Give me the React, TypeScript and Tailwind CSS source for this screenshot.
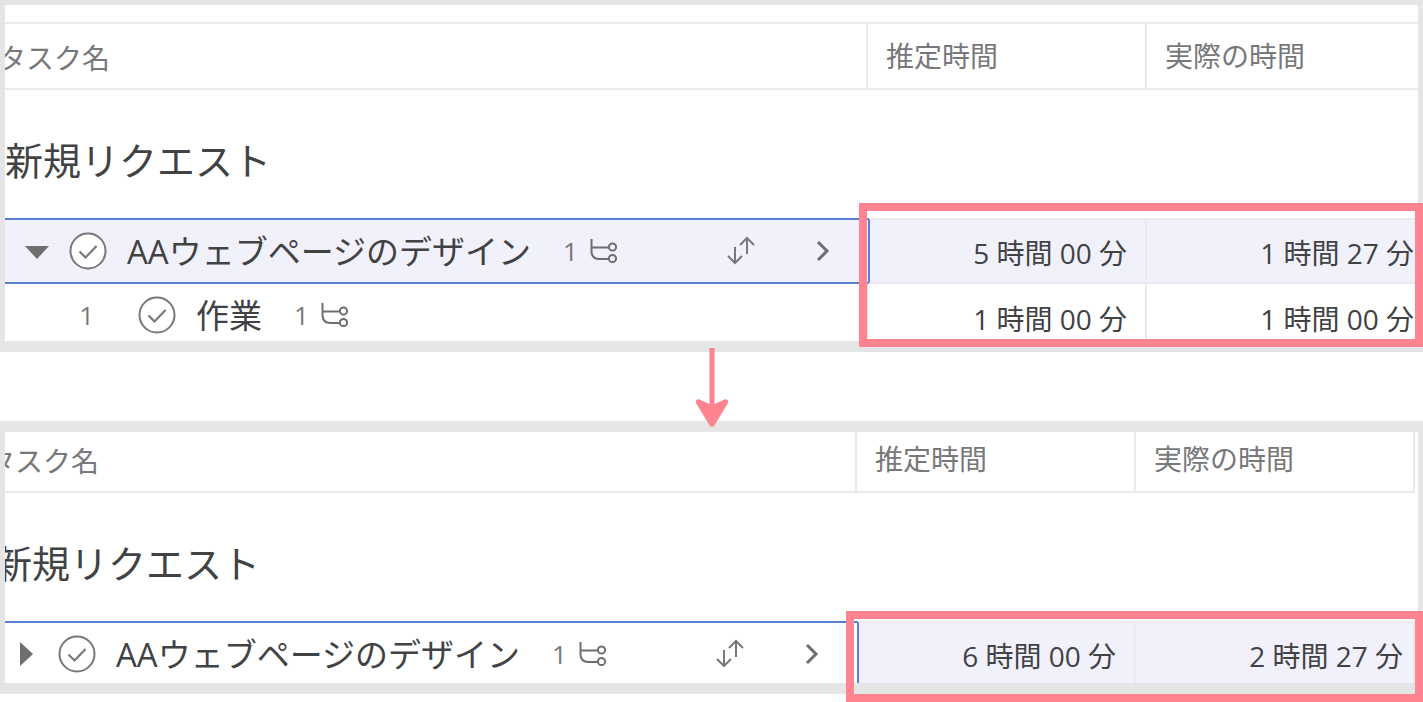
import clsx from "clsx";

type Task = {
  name: string;
  number?: string;
  subtasks: number;
  estimated: string;
  actual: string;
  selected?: boolean;
  open?: boolean;
};

const expandedTasks: Task[] = [
  {
    name: "AAウェブページのデザイン",
    subtasks: 1,
    estimated: "5 時間 00 分",
    actual: "1 時間 27 分",
    selected: true,
    open: true,
  },
  {
    name: "作業",
    number: "1",
    subtasks: 1,
    estimated: "1 時間 00 分",
    actual: "1 時間 00 分",
  },
];

const collapsedTasks: Task[] = [
  {
    name: "AAウェブページのデザイン",
    subtasks: 1,
    estimated: "6 時間 00 分",
    actual: "2 時間 27 分",
    selected: true,
  },
];

function Caret({ open }: { open?: boolean }) {
  return (
    <svg width="24" height="24" viewBox="0 0 24 24" fill="#6d6e6f">
      {open ? <path d="M0 7h24L12 20z" /> : <path d="M6 0v24l13-12z" />}
    </svg>
  );
}

function CheckCircle() {
  return (
    <svg width="38" height="38" viewBox="0 0 38 38" fill="none" stroke="#77787a">
      <circle cx="19" cy="19" r="17.5" fill="#fff" strokeWidth="2" />
      <path d="M10.500 19.500l6 6 11-11.500" strokeWidth="2.2" />
    </svg>
  );
}

function SubtaskIcon() {
  return (
    <svg width="28" height="26" viewBox="0 0 28 26" fill="none" stroke="#6d6e6f" strokeWidth="2">
      <path d="M1.500 1v12q0 8 8 8H19M1.500 9.500H19" />
      <circle cx="22.5" cy="9" r="3.6" />
      <circle cx="22.5" cy="20.5" r="3.6" />
    </svg>
  );
}

function SortIcon() {
  return (
    <svg width="30" height="30" viewBox="0 0 30 30" fill="none" stroke="#77787a" strokeWidth="2">
      <path d="M9 11v16M2 20l7 7 7-7M21 18V2M14 9l7-7 7 7" />
    </svg>
  );
}

function ChevronIcon() {
  return (
    <svg width="14" height="22" viewBox="0 0 14 22" fill="none" stroke="#6d6e6f" strokeWidth="3">
      <path d="M2 2l9 9-9 9" />
    </svg>
  );
}

function TaskRow({ task }: { task: Task }) {
  const timeCell = clsx(
    "border-r-2 border-[#ebe9e9] pt-1 text-right text-[28px] text-[#414243]",
    task.selected && "border-y-2 bg-[#f1f1fc]"
  );

  return (
    <tr className="h-[66px]">
      <td
        className={clsx(
          "p-0",
          task.selected ? "border-y-2 border-[#5680d4]" : "border-r-2 border-[#ebe9e9] pb-1",
          task.open && "bg-[#f1f1fc]"
        )}
      >
        <div className="flex items-center pl-[27px] pr-[38px]">
          {task.number ? (
            <span className="mr-11 w-[69px] text-right text-[26px] text-[#77787a]">
              {task.number}
            </span>
          ) : (
            <button type="button" aria-label="サブタスク" className="mr-5">
              <Caret open={task.open} />
            </button>
          )}
          <button type="button" aria-label="完了" className="mr-5">
            <CheckCircle />
          </button>
          <span className="text-[33px] text-[#414243]">{task.name}</span>
          <span className="ml-8 mr-3 text-[26px] text-[#77787a]">
            {task.subtasks}
          </span>
          <SubtaskIcon />
          {task.selected && (
            <div className="ml-auto flex items-center gap-[60px]">
              <button type="button" aria-label="並べ替え">
                <SortIcon />
              </button>
              <button type="button" aria-label="詳細">
                <ChevronIcon />
              </button>
            </div>
          )}
        </div>
      </td>
      <td
        className={clsx(
          timeCell,
          "pr-[18px]",
          task.selected && "border-l-2 border-l-[#5680d4]"
        )}
      >
        {task.estimated}
      </td>
      <td className={clsx(timeCell, "pr-[10px]")}>{task.actual}</td>
    </tr>
  );
}

function TaskTable({ tasks, className }: { tasks: Task[]; className: string }) {
  const headCell =
    "border-y-2 border-r-2 border-[#ebe9e9] text-left text-[28px] font-normal text-[#77787a]";

  return (
    <table
      className={clsx(
        "table-fixed border-separate border-spacing-0 whitespace-nowrap leading-none",
        className
      )}
    >
      <colgroup>
        <col />
        <col className="w-[279px]" />
        <col className="w-[279px]" />
      </colgroup>
      <thead>
        <tr className="h-[68px]">
          <th className={clsx(headCell, "p-0 pt-1")}>タスク名</th>
          <th className={clsx(headCell, "p-0 pl-[18px]")}>推定時間</th>
          <th className={clsx(headCell, "p-0 pl-[18px]")}>実際の時間</th>
        </tr>
      </thead>
      <tbody>
        <tr className="h-32">
          <td colSpan={3} className="pb-0 pl-[7px] pt-3">
            <h2 className="text-[38px] text-[#414243]">新規リクエスト</h2>
          </td>
        </tr>
        {tasks.map((task) => (
          <TaskRow key={task.name} task={task} />
        ))}
      </tbody>
    </table>
  );
}

export default function App() {
  return (
    <main className="bg-white font-['Open_Sans','Noto_Sans_CJK_JP',sans-serif]">
      <section className="relative">
        <div className="overflow-hidden border-[5px] border-b-[11px] border-[#e5e5e5] pt-[17px]">
          <TaskTable
            tasks={expandedTasks}
            className="-mb-[9px] -ml-[7px] w-[calc(100%+15px)]"
          />
        </div>
        <div className="absolute bottom-[5px] right-0 h-36 w-[564px] border-8 border-[#ff8391]" />
      </section>

      <div className="relative z-10 -mb-1.5 -mt-1 flex justify-center">
        <svg width="34" height="79" viewBox="0 0 34 79" fill="#ff8391">
          <path d="M14.500 0h5v56l9.500-4.300c3-1.300 5.500 1.300 3.600 4L19.500 77.200c-1.300 2.200-3.700 2.200-5 0L1.400 55.700c-1.900-2.700.6-5.300 3.600-4l9.500 4.300z" />
        </svg>
      </div>

      <section className="relative mb-2">
        <div className="overflow-hidden border-x-[5px] border-y-[11px] border-[#e5e5e5]">
          <TaskTable
            tasks={collapsedTasks}
            className="-mb-1 -ml-[18px] -mt-[7px] w-[calc(100%+15px)]"
          />
        </div>
        <div className="absolute -bottom-2 right-0 h-[91px] w-[577px] border-8 border-[#ff8391]" />
      </section>
    </main>
  );
}
